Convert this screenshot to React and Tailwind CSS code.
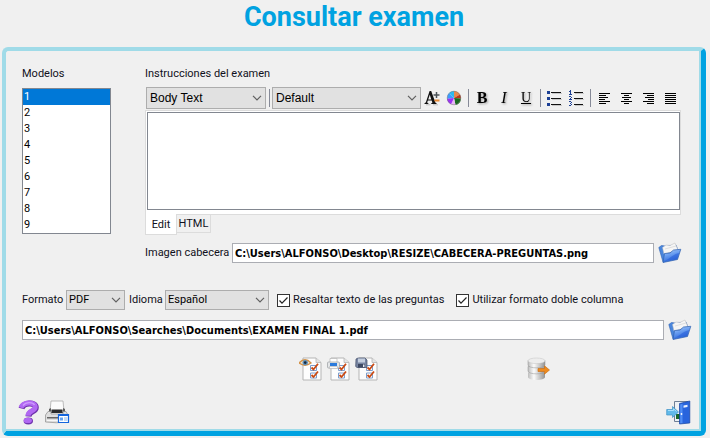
import React, { useState } from "react";

const modelos = ["1", "2", "3", "4", "5", "6", "7", "8", "9"];

const fieldClass =
  "h-5 min-w-0 flex-1 border border-[#abadb3] bg-white px-[2px] font-['DejaVu_Sans_Condensed','DejaVu_Sans',sans-serif] text-[11px] font-bold text-black outline-none";

/* ---------- Form controls ---------- */

const Combo = ({ id, label, options, className, selectClass }) => (
  <div className={`relative ${className}`}>
    <select
      id={id}
      aria-label={label}
      className={`block w-full appearance-none border border-[#adadad] bg-[#e1e1e1] text-black outline-none ${selectClass}`}
    >
      {options.map((option) => (
        <option key={option}>{option}</option>
      ))}
    </select>
    <svg
      viewBox="0 0 10 6"
      className="pointer-events-none absolute top-1/2 right-1 h-[6px] w-[10px] -translate-y-1/2"
      fill="none"
      stroke="#606060"
      strokeWidth="1.2"
    >
      <path d="M1 0.8 L5 4.8 L9 0.8" />
    </svg>
  </div>
);

const Check = ({ label }) => (
  <label className="flex items-center gap-[3px] whitespace-nowrap">
    <span className="relative flex">
      <input
        type="checkbox"
        defaultChecked
        className="peer h-[13px] w-[13px] appearance-none border border-[#333333] bg-white"
      />
      <svg
        viewBox="0 0 13 13"
        className="pointer-events-none absolute inset-0 hidden h-[13px] w-[13px] peer-checked:block"
        fill="none"
        stroke="#222222"
        strokeWidth="1.2"
      >
        <path d="M2.5 6.5 L5 9.2 L10.5 3.5" />
      </svg>
    </span>
    {label}
  </label>
);

const ToolButton = ({ label, children }) => (
  <button
    type="button"
    aria-label={label}
    className="flex h-[22px] w-[22px] shrink-0 items-center justify-center"
  >
    {children}
  </button>
);

const Separator = () => (
  <span className="flex h-[18px] w-[6px] shrink-0 justify-center">
    <span className="w-px bg-[#868a98]" />
  </span>
);

/* ---------- Toolbar icons ---------- */

const Letter = ({ children, className }) => (
  <span
    className={`font-['Liberation_Serif',serif] leading-4 text-black drop-shadow-[1px_1px_1px_rgba(0,0,0,0.35)] ${className}`}
  >
    {children}
  </span>
);

const FontSizeIcon = () => (
  <svg viewBox="0 0 16 16" className="h-4 w-4">
    <path d="M2 14.8 H6.5 M9 14.8 H14" stroke="#b9b9b9" strokeWidth="1" />
    <path
      d="M5.6 1 H7.2 L11.3 12.3 Q11.6 13.2 12.6 13.3 V14 H7.2 V13.3 Q8.6 13.2 8.3 12.2 L7.7 10.4 H3.9 L3.3 12 Q3 13.2 4.4 13.3 V14 H0.5 V13.3 Q1.6 13.2 2 12.1 Z M5.8 4.8 L4.2 9.4 H7.3 Z"
      fill="#111"
      fillRule="evenodd"
    />
    <path d="M9.5 5 H15.5 M12.5 2 V8" stroke="#4c5358" strokeWidth="1.5" />
    <path d="M10.5 10.5 H15.5" stroke="#e98a35" strokeWidth="2" />
  </svg>
);

const ColorIcon = () => (
  <svg viewBox="0 0 16 16" className="h-4 w-4">
    <path d="M8 8 V1 A7 7 0 0 1 14 4.5 Z" fill="#e58a4c" />
    <path d="M8 8 L14 4.5 A7 7 0 0 1 15 8.5 Z" fill="#b83418" />
    <path d="M8 8 L15 8.5 A7 7 0 0 1 9.5 15 Z" fill="#176a1d" />
    <path d="M8 8 L9.5 15 A7 7 0 0 1 5 14.3 Z" fill="#e7b6f5" />
    <path d="M8 8 L5 14.3 A7 7 0 0 1 1 8.5 Z" fill="#9c32f5" />
    <path d="M8 8 L1 8.5 A7 7 0 0 1 3 3.1 Z" fill="#3c9cff" />
    <path d="M8 8 L3 3.1 A7 7 0 0 1 8 1 Z" fill="#2cb9ee" />
    <circle cx="8" cy="8" r="6.8" fill="none" stroke="#777" strokeWidth="0.5" />
  </svg>
);

const BulletsIcon = () => (
  <svg viewBox="0 0 16 16" className="h-4 w-4" shapeRendering="crispEdges">
    <path d="M1 1h3v3H1zM1 7h3v3H1zM1 13h3v3H1z" fill="#1b3f95" />
    <path d="M6 3h10v1H6zM6 9h10v1H6zM6 15h10v1H6z" fill="#c8c8c8" />
    <path d="M5 2h10v1H5zM5 8h10v1H5zM5 14h10v1H5z" fill="#111" />
  </svg>
);

const NumbersIcon = () => (
  <svg viewBox="0 0 16 16" className="h-4 w-4" shapeRendering="crispEdges">
    <path
      d="M2 0h1v4H2zM1 1h1v1H1zM1 4h3v1H1zM1 6h2v1H1zM3 7h1v1H3zM2 8h1v1H2zM1 9h3v1H1zM1 11h2v1H1zM3 12h1v1H3zM2 13h1v1H2zM3 14h1v1H3zM1 15h2v1H1z"
      fill="#1b3f95"
    />
    <path d="M7 3h9v1H7zM7 9h9v1H7zM7 15h9v1H7z" fill="#c8c8c8" />
    <path d="M6 2h9v1H6zM6 8h9v1H6zM6 14h9v1H6z" fill="#111" />
  </svg>
);

const alignPaths = {
  left: "M0 0h11v1H0zM0 2h7v1H0zM0 4h9v1H0zM0 6h6v1H0zM0 8h11v1H0zM0 10h7v1H0z",
  center: "M0 0h11v1H0zM3 2h5v1H3zM1 4h9v1H1zM3 6h5v1H3zM0 8h11v1H0zM3 10h5v1H3z",
  right: "M0 0h11v1H0zM4 2h7v1H4zM2 4h9v1H2zM5 6h6v1H5zM0 8h11v1H0zM4 10h7v1H4z",
  full: "M0 0h11v1H0zM0 2h11v1H0zM0 4h11v1H0zM0 6h11v1H0zM0 8h11v1H0zM0 10h11v1H0z",
};

const AlignIcon = ({ kind }) => (
  <svg viewBox="0 0 11 11" className="h-[11px] w-[11px]" shapeRendering="crispEdges">
    <path d={alignPaths[kind]} fill="#000" />
  </svg>
);

/* ---------- Large icons ---------- */

const FolderIcon = () => (
  <svg viewBox="0 0 24 22" className="h-[22px] w-6">
    <defs>
      <linearGradient id="folderFront" x1="0" y1="0" x2="0.4" y2="1">
        <stop offset="0" stopColor="#b4d4fc" />
        <stop offset="0.5" stopColor="#679cf0" />
        <stop offset="1" stopColor="#2b66d6" />
      </linearGradient>
    </defs>
    <path d="M0.8 5.5 L3.5 3.5 L7 4 L18 3 L20 8 L8 19 L5 20 Z" fill="#4a86dc" stroke="#2d62b5" strokeWidth="0.6" />
    <path d="M4.5 5.5 L8 3 L12 3.4 L17 1 L20 8 L6 12 Z" fill="#f5f5f5" stroke="#bcbcbc" strokeWidth="0.5" />
    <path d="M7 7 L18 4" stroke="#d4d4d4" strokeWidth="0.7" />
    <path d="M5 20.5 L6.5 11.5 L12 11 L15.5 8 L22.8 7.3 L19.5 17.5 Z" fill="url(#folderFront)" stroke="#2c5fae" strokeWidth="0.7" />
    <path d="M6 19 C11 18 13 13 21 11 L19 17 Z" fill="#2058d8" opacity="0.5" />
  </svg>
);

const SheetBase = () => (
  <>
    <path d="M4 1 H17 L22 5.5 V23 H4 Z" fill="#fdfdfd" stroke="#b5b5b5" />
    <path d="M17 1 V5.5 H22" fill="#e4e4e4" stroke="#b5b5b5" strokeWidth="0.8" />
    <path d="M11.5 8.5h6v5h-6zM11.5 16h6v5h-6z" fill="#fff" stroke="#7c9dcc" />
    <path d="M12.5 10.5 L14.5 12.5 L19 6.8 M12.5 18 L14.5 20 L19 14.5" fill="none" stroke="#ca4a13" strokeWidth="1.8" />
  </>
);

const PreviewIcon = () => (
  <svg viewBox="0 0 24 24" className="h-6 w-6">
    <SheetBase />
    <path d="M0 6 Q6 -0.5 12 6 Q6 10.5 0 6 Z" fill="#f7e7d2" stroke="#d29248" strokeWidth="1.3" />
    <circle cx="6.2" cy="5.6" r="2.7" fill="#5e8fb9" />
    <circle cx="6.2" cy="5.6" r="1.3" fill="#18293b" />
  </svg>
);

const PrintSheetIcon = () => (
  <svg viewBox="0 0 24 24" className="h-6 w-6">
    <SheetBase />
    <path d="M3 1.5h7v4H3z" fill="#fff" stroke="#b4b4b4" strokeWidth="0.7" />
    <rect x="0.5" y="5" width="12" height="6" rx="1" fill="#e4e6e8" stroke="#9a9da1" strokeWidth="0.7" />
    <path d="M3 6h7v3H3z" fill="#2c7bdc" />
    <path d="M2.5 9.5h8v2h-8z" fill="#fafafa" stroke="#aaa" strokeWidth="0.5" />
  </svg>
);

const SaveSheetIcon = () => (
  <svg viewBox="0 0 24 24" className="h-6 w-6">
    <SheetBase />
    <path d="M1 2 L3 1 H10 L12 3 V10.5 H2 L0.7 9.5 Z" fill="#7784a0" stroke="#424d68" strokeWidth="0.7" />
    <path d="M3 1.5h7v4H3z" fill="#c4cede" />
    <path d="M3 7h7v3.5H3z" fill="#3d4862" />
    <path d="M8 7.5h1.5v2.5H8z" fill="#e4e8ef" />
  </svg>
);

const DatabaseIcon = () => (
  <svg viewBox="0 0 24 24" className="h-6 w-6">
    <defs>
      <linearGradient id="dbBody">
        <stop offset="0" stopColor="#bdbdbd" />
        <stop offset="0.35" stopColor="#fbfbfb" />
        <stop offset="1" stopColor="#949494" />
      </linearGradient>
    </defs>
    <path d="M2 15.5 V20 C2 24 19 24 19 20 V15.5 Z" fill="url(#dbBody)" />
    <path d="M2 9.5 V14 C2 17.8 19 17.8 19 14 V9.5 Z" fill="url(#dbBody)" stroke="#929292" strokeWidth="0.5" />
    <path d="M2 3.5 V8 C2 11.8 19 11.8 19 8 V3.5 Z" fill="url(#dbBody)" stroke="#929292" strokeWidth="0.5" />
    <ellipse cx="10.5" cy="3.8" rx="8.5" ry="2.8" fill="#ededed" stroke="#c2c2c2" strokeWidth="0.5" />
    <path d="M12 11.5 H18.5 V8.8 L23.5 13 L18.5 17.2 V14.5 H12 Z" fill="#ee8a1e" stroke="#c66b10" strokeWidth="0.6" />
  </svg>
);

const HelpIcon = () => (
  <svg viewBox="0 0 22 26" className="h-[26px] w-[22px]">
    <path d="M3.5 9.5 C5 3.5 17.8 2.5 17.8 8.5 C17.8 13.2 10.8 11.5 10.5 17.5" fill="none" stroke="#6d31aa" strokeWidth="6" />
    <path d="M3 8.8 C5 2.8 17.2 2.2 17.2 8 C17.2 12.4 10 11 10 16.8" fill="none" stroke="#b168f2" strokeWidth="5" />
    <path d="M5 6.5 C8 2.5 15 3 16.5 6" fill="none" stroke="#d09bff" strokeWidth="1.3" />
    <ellipse cx="10.3" cy="22" rx="4.7" ry="3.4" fill="#7135ae" />
    <ellipse cx="9.8" cy="21.4" rx="4.1" ry="2.7" fill="#b168f2" />
  </svg>
);

const PrinterIcon = () => (
  <svg viewBox="0 0 26 26" className="h-[26px] w-[26px]">
    <path d="M7 2 H19 L20 12 H6 Z" fill="#fbfbfb" stroke="#a2a2a2" strokeWidth="0.7" />
    <path d="M5 10 L7 9 V13 H19 V9 L21 10 V14 H5 Z" fill="#5b5b5b" />
    <path d="M7.5 10.5h11v3.5h-11z" fill="#2b2b2b" />
    <path d="M1.5 16 L4 12.5 H7 V15 H19 V12.5 H22 L24 16 V23 Q12 24.5 1.5 23 Z" fill="#dedede" stroke="#8d8d8d" strokeWidth="0.7" />
    <path d="M3 18h14v1.5H3z" fill="#666" />
    <path d="M3 21h11v1H3z" fill="#f7f7f7" />
    <path d="M14.5 15.5h10v8h-10z" fill="#fff" stroke="#1465dd" strokeWidth="1.2" />
    <path d="M14 15h11v2H14z" fill="#1465dd" />
    <path d="M16 18.5h3v3h-3z" fill="#63a4f3" />
    <path d="M20 19h3.5M20 21h3.5" stroke="#8cb9ed" />
  </svg>
);

const ExitIcon = () => (
  <svg viewBox="0 0 26 26" className="h-[26px] w-[26px]">
    <path d="M8.5 2.5 H22 V22.5 H8.5 Z" fill="#eef1f5" stroke="#6f7f96" />
    <path d="M10 15h4v5h-4z" fill="#17682b" />
    <path d="M13.5 4.5 L23.8 2 V24 L13.5 25 Z" fill="#2864dd" stroke="#1745a0" strokeWidth="0.7" />
    <path d="M14.2 5.5 L16.5 4.8 V24 L14.2 24.2 Z" fill="#4f8ef5" />
    <path d="M17.5 6.5 L21.5 5.8 V8 L17.5 8.7 Z" fill="#eaf2ff" />
    <circle cx="15.5" cy="15" r="0.9" fill="#fff" />
    <path d="M0.7 10.5 H6.5 V7.5 L12.5 13 L6.5 18.5 V16 H0.7 Z" fill="#62baea" stroke="#3f92c6" strokeWidth="0.7" />
    <path d="M2 11.5 H7.5 V9.8 L10.5 12.5" fill="none" stroke="#a9e0fb" />
  </svg>
);

const IconButton = ({ label, children }) => (
  <button type="button" aria-label={label} title={label} className="shrink-0">
    {children}
  </button>
);

/* ---------- Sections ---------- */

const ModelList = () => {
  const [selected, setSelected] = useState("1");

  return (
    <section className="w-[89px] shrink-0">
      <h2 id="modelos" className="mb-1.5 leading-4">
        Modelos
      </h2>
      <div role="listbox" aria-labelledby="modelos" className="border border-[#828790] bg-white">
        {modelos.map((modelo) => (
          <button
            key={modelo}
            type="button"
            role="option"
            aria-selected={selected === modelo}
            onClick={() => setSelected(modelo)}
            className={`block h-4 w-full px-px text-left leading-4 ${
              selected === modelo ? "bg-[#0078d7] text-white" : "text-black"
            }`}
          >
            {modelo}
          </button>
        ))}
      </div>
    </section>
  );
};

const Editor = () => (
  <section className="min-w-0 flex-1">
    <label htmlFor="instrucciones" className="mb-[5px] block leading-4">
      Instrucciones del examen
    </label>

    {/* Toolbar */}
    <div className="flex items-center pl-px font-['Liberation_Sans',sans-serif]">
      <Combo label="Estilo" options={["Body Text"]} className="w-[120px]" selectClass="h-[22px] px-[3px] text-[12px]" />
      <Separator />
      <Combo label="Fuente" options={["Default"]} className="min-w-0 flex-1" selectClass="h-[22px] px-[3px] text-[12px]" />
      <ToolButton label="Tamaño"><FontSizeIcon /></ToolButton>
      <ToolButton label="Color"><ColorIcon /></ToolButton>
      <Separator />
      <ToolButton label="Negrita"><Letter className="text-[16px] font-bold">B</Letter></ToolButton>
      <ToolButton label="Cursiva"><Letter className="text-[16px] italic">I</Letter></ToolButton>
      <ToolButton label="Subrayado"><Letter className="text-[14px] underline">U</Letter></ToolButton>
      <Separator />
      <ToolButton label="Lista"><BulletsIcon /></ToolButton>
      <ToolButton label="Lista numerada"><NumbersIcon /></ToolButton>
      <Separator />
      <ToolButton label="Izquierda"><AlignIcon kind="left" /></ToolButton>
      <ToolButton label="Centro"><AlignIcon kind="center" /></ToolButton>
      <ToolButton label="Derecha"><AlignIcon kind="right" /></ToolButton>
      <ToolButton label="Justificar"><AlignIcon kind="full" /></ToolButton>
    </div>

    {/* Text area */}
    <div className="mt-px border border-b-0 border-[#dcdcdc] bg-white pt-px pr-0 pb-1 pl-px">
      <textarea
        id="instrucciones"
        className="block h-[98px] w-full resize-none border border-[#828790] bg-white p-1 outline-none"
      />
    </div>

    {/* Tabs */}
    <div role="tablist" className="flex items-start">
      <button type="button" role="tab" aria-selected="true" className="h-[21px] w-8 border border-t-0 border-[#dcdcdc] bg-white pt-0.5 text-center leading-4">
        Edit
      </button>
      <div className="flex flex-1 border-t border-[#dcdcdc]">
        <button type="button" role="tab" aria-selected="false" className="h-[18px] w-[34px] border border-t-0 border-l-0 border-[#dcdcdc] text-center leading-4">
          HTML
        </button>
      </div>
    </div>
  </section>
);

const App = () => {
  return (
    <main className="min-h-screen bg-[#f0f0f0] pr-1 pb-0.5 pl-0.5 font-[Roboto,sans-serif] text-[11px] text-[#101020]">
      <h1 className="h-[47px] text-center text-[27px] leading-[35px] font-bold text-[#00a2e1]">
        Consultar examen
      </h1>

      <div className="rounded-md border-t-4 border-r-[5px] border-b-[5px] border-l-4 border-t-[#a0dbe8] border-r-[#00a2e1] border-b-[#00a2e1] border-l-[#a0dbe8]">
        <div className="border-r-2 border-b-2 border-[#a0dbe8] pt-[15px] pr-[7px] pb-1 pl-4">

          {/* Models and instructions */}
          <div className="flex gap-[34px] pr-[11px]">
            <ModelList />
            <Editor />
          </div>

          {/* Header image */}
          <div className="mt-[7px] flex items-center pr-[10px] pl-[123px]">
            <label htmlFor="cabecera" className="w-[87px] shrink-0 whitespace-nowrap">
              Imagen cabecera
            </label>
            <input
              id="cabecera"
              className={fieldClass}
              defaultValue="C:\Users\ALFONSO\Desktop\RESIZE\CABECERA-PREGUNTAS.png"
            />
            <span className="ml-1 flex">
              <IconButton label="Buscar imagen"><FolderIcon /></IconButton>
            </span>
          </div>

          {/* Output options */}
          <div className="mt-[26px] flex items-center">
            <label htmlFor="formato" className="w-11 shrink-0">Formato</label>
            <Combo id="formato" options={["PDF"]} className="w-[59px]" selectClass="h-5 px-[2px] text-[11px]" />
            <label htmlFor="idioma" className="ml-1 w-9 shrink-0">Idioma</label>
            <Combo id="idioma" options={["Español"]} className="w-[104px]" selectClass="h-5 px-[2px] text-[11px]" />
            <div className="ml-2 flex gap-3">
              <Check label="Resaltar texto de las preguntas" />
              <Check label="Utilizar formato doble columna" />
            </div>
          </div>

          {/* Output file */}
          <div className="mt-[9px] flex items-center">
            <input
              aria-label="Archivo"
              className={fieldClass}
              defaultValue="C:\Users\ALFONSO\Searches\Documents\EXAMEN FINAL 1.pdf"
            />
            <span className="ml-1 flex">
              <IconButton label="Buscar archivo"><FolderIcon /></IconButton>
            </span>
          </div>

          {/* Actions */}
          <div className="mt-4 flex items-center justify-center pl-[134px]">
            <div className="flex gap-1">
              <IconButton label="Vista previa"><PreviewIcon /></IconButton>
              <IconButton label="Imprimir examen"><PrintSheetIcon /></IconButton>
              <IconButton label="Guardar examen"><SaveSheetIcon /></IconButton>
            </div>
            <span className="ml-[147px] flex">
              <IconButton label="Exportar"><DatabaseIcon /></IconButton>
            </span>
          </div>

          {/* Footer */}
          <div className="-ml-1 mt-[18px] flex items-center justify-between">
            <div className="flex gap-1">
              <IconButton label="Ayuda"><HelpIcon /></IconButton>
              <IconButton label="Imprimir"><PrinterIcon /></IconButton>
            </div>
            <IconButton label="Salir"><ExitIcon /></IconButton>
          </div>

        </div>
      </div>
    </main>
  );
};

export default App;
